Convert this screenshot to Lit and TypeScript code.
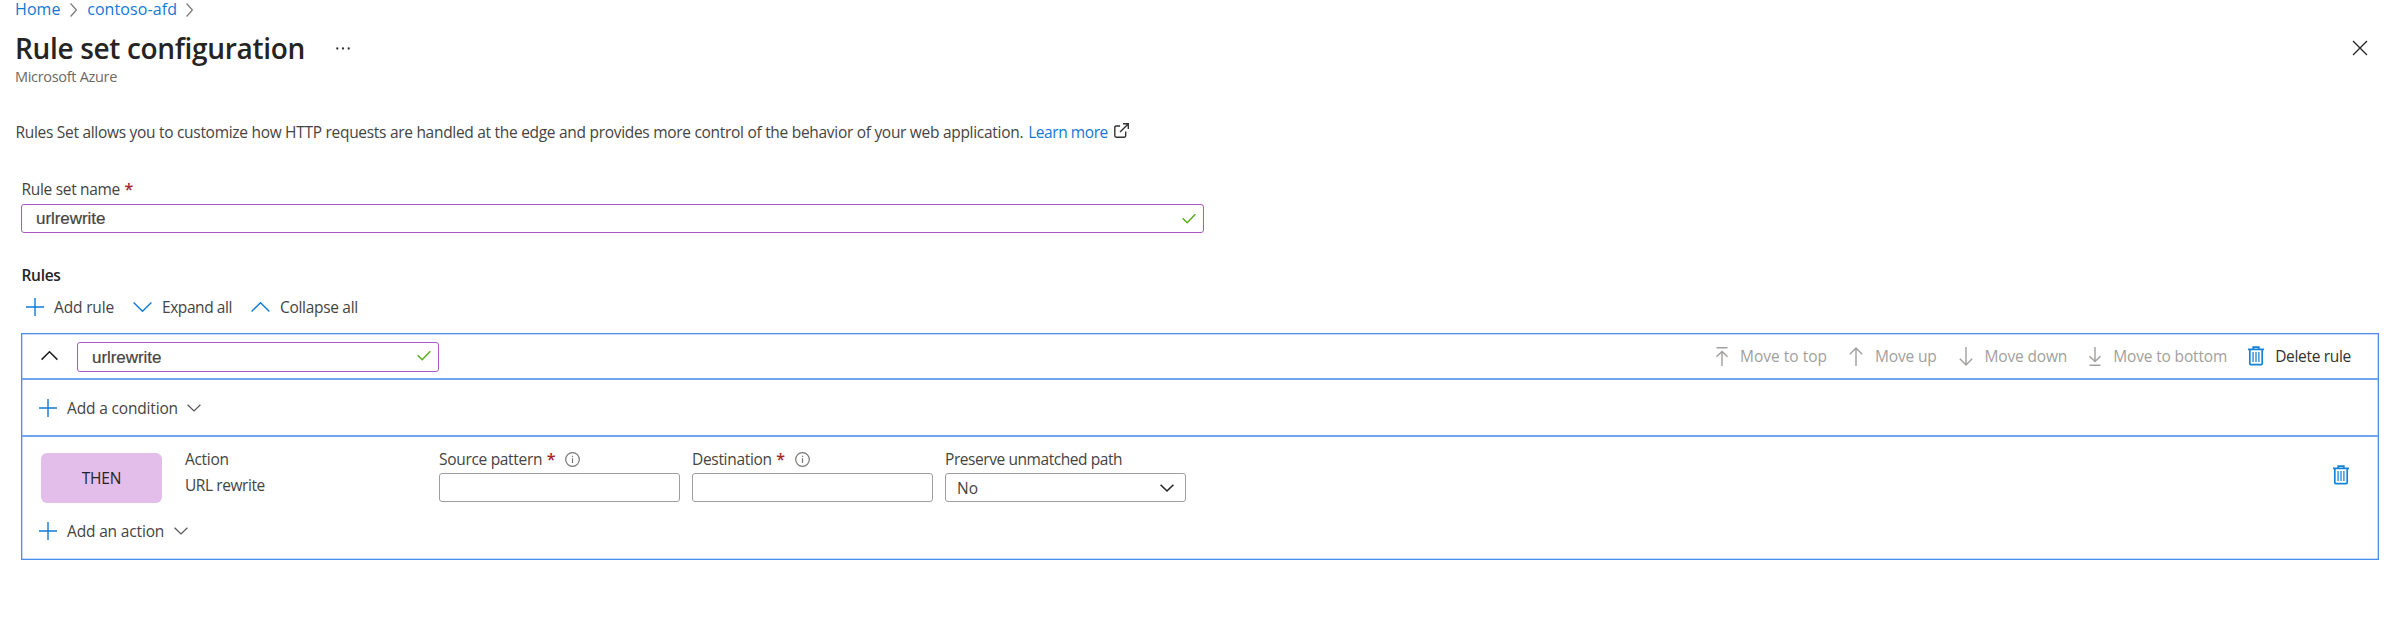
import { LitElement, html, svg, css } from "lit";
import { customElement } from "lit/decorators.js";

const stroke = (w: number, h: number, d: string, cls = "") =>
  html`<svg class="icon ${cls}" width=${w} height=${h} viewBox="0 0 ${w} ${h}"><path d=${d} /></svg>`;

const plus = (cls = "") => stroke(18, 18, "M9 0V18M0 9H18", `blue ${cls}`);
const check = () => stroke(14, 11, "M.7 5.2L5.2 9.7L13.3 1.2", "green");
const down = (cls: string) => stroke(14, 8, "M.6 .8L7 7L13.4 .8", cls);
const info = () => html`<svg class="icon info" width="15" height="15" viewBox="0 0 15 15">
  ${svg`<circle cx="7.5" cy="7.5" r="6.8" /><path d="M7.5 6.2V11M7.5 3.8V5" />`}</svg>`;
const trash = () => html`<svg class="icon trash" width="16" height="20" viewBox="0 0 16 20">
  ${svg`<path class="lid" d="M0 3.3H16M5.2 3V1.2H10.8V3" /><path class="can" d="M1.8 3.5V17.6Q1.8 18.6 2.8 18.6H13.2Q14.2 18.6 14.2 17.6V3.5" /><path class="bars" d="M5.1 6V16M8 6V16M10.9 6V16" />`}</svg>`;

@customElement("app-root")
export class AppRoot extends LitElement {
  static styles = css`
    :host { display: block; height: 622px; background: #fff; color: #454442;
      font: 15.5px/20px "Open Sans", "Noto Sans", sans-serif; }
    * { box-sizing: border-box; }
    .row { display: flex; align-items: center; white-space: nowrap; }
    .icon { display: block; flex: none; fill: none; stroke: currentColor; stroke-width: 1.4; overflow: visible; }
    .blue { color: #0f7ad8; }
    .green { color: #5bac1b; }
    .green.icon { stroke-width: 1.5; }
    .t15 { letter-spacing: -0.16px; }
    .t3 { letter-spacing: -0.31px; }
    .t4 { letter-spacing: -0.43px; }

    .crumbs { height: 18px; padding-left: 15px; font-size: 16px; line-height: 18px; letter-spacing: 0.1px; color: #1478d4; }
    .crumbs .sep { color: #777; margin: 2px 10.5px 0 9px; stroke-width: 1.2; }
    .titlebar { height: 36px; margin-top: 12px; padding: 0 33px 0 15px; }
    h1 { margin: 0; width: 321px; font-size: 28px; line-height: 36px; font-weight: 600; letter-spacing: -0.33px; color: #252423; }
    .dots { fill: #333; stroke: none; }
    .close { margin-left: auto; color: #222; stroke-width: 1.3; }
    .sub { margin-top: 1px; padding-left: 15px; font-size: 14.5px; color: #6b6967; }
    .desc { margin-top: 35px; padding-left: 15.5px; }
    .desc .copy { letter-spacing: -0.295px; }
    .desc a { color: #1478d4; margin: 0 6px 0 5px; }
    .desc .icon { margin-top: -4px; color: #333; }

    .main { padding: 37px 21px 0; }
    .caption { padding-left: 0.5px; }
    .star { color: #a4262c; font-weight: 600; margin-left: 4.5px; font-size: 16px; }
    .field { display: flex; align-items: center; height: 29px; border: 1px solid #a09f9e; border-radius: 3px; padding: 0 11px; background: #fff; }
    .valid { justify-content: space-between; border: 1px solid #ab58c4; padding: 0 7px 0 14px; font-family: "Liberation Sans", Arial, sans-serif; font-size: 17px; letter-spacing: -0.05px; -webkit-text-stroke: 0.2px #454442; }
    .name { width: 1183px; margin-top: 5px; }
    .heading { margin-top: 32px; padding-left: 0.5px; font-weight: 600; color: #252423; }
    .tools { height: 20px; margin-top: 12px; padding-left: 5px; }
    .tools .icon { margin-right: 10px; }
    .add { width: 107px; }
    .expand { width: 118px; }

    .card { height: 227px; margin-top: 16px; width: 2358px; border: 1px solid #4c8deb; box-shadow: inset 0 0 0 0.5px #8db8f5; }
    .head { height: 46px; padding: 0 27px 0 19px; border-bottom: 2px solid #72a5ef; }
    .head .up { color: #222; margin: -1px 19px 0 0; stroke-width: 1.6; }
    .rule { width: 362px; height: 30px; margin-top: 1px; }
    .rule .icon { margin-top: -3px; }
    .rule span { margin-top: 3px; }
    .cmds { margin-left: auto; color: #a19f9d; }
    .cmds .lbl { margin-left: 12px; }
    .cmds .row + .row { margin-left: 22px; }
    .cmds .row + .del { margin-left: 21px; color: #323130; }
    .cmds .del .lbl { margin-left: 11px; }
    .trash { color: #1583d8; }
    .trash .lid, .trash .can { stroke-width: 1.7; }
    .trash .bars { stroke-width: 1.5; stroke: #3b96de; }
    .cond { height: 57px; padding-left: 17px; border-bottom: 2px solid #72a5ef; }
    .addline .icon.blue { margin-right: 10px; }
    .chev { color: #555; margin-left: 9.5px; stroke-width: 1.2; }
    .body { padding: 16px 29px 0 19px; }
    .action { display: flex; align-items: flex-start; height: 50px; }
    .then { display: grid; place-items: center; width: 121px; height: 50px; border-radius: 6px; background: #e3beeb; color: #252423; font-weight: 500; letter-spacing: -0.2px; }
    .kind { width: 254px; margin: -4px 0 0 23px; }
    .kind div + div { margin-top: 6px; }
    .param { width: 241px; margin: -4px 12px 0 0; }
    .param .field { margin-top: 4px; }
    .select { justify-content: space-between; }
    .dark { color: #222; stroke-width: 1.6; }
    .info { color: #777; margin-left: 9.5px; stroke-width: 1.2; }
    .bin { margin: 12px 0 0 auto; }
    .more { margin: 18px 0 0 -2px; }
  `;

  render() {
    const sep = () => stroke(7, 14, "M.6 .5L6.4 7L.6 13.5", "sep");
    const star = html`<span class="star">*</span>`;
    return html`
      <nav class="row crumbs"><span>Home</span>${sep()}<span>contoso-afd</span>${sep()}</nav>
      <header class="row titlebar">
        <h1>Rule set configuration</h1>
        <svg class="icon dots" width="14" height="3" viewBox="0 0 14 3"><circle cx="1.3" cy="1.5" r="1.15" /><circle cx="7" cy="1.5" r="1.15" /><circle cx="12.7" cy="1.5" r="1.15" /></svg>
        ${stroke(14, 14, "M0 0L14 14M14 0L0 14", "close")}
      </header>
      <div class="sub t3">Microsoft Azure</div>
      <div class="row desc">
        <span class="copy">Rules Set allows you to customize how HTTP requests are handled at the edge and provides more control of the behavior of your web application.</span>
        <a class="t4">Learn more</a>
        ${stroke(15, 15, "M6 3H2.2Q.8 3 .8 4.4V12.8Q.8 14.2 2.2 14.2H10.3Q11.7 14.2 11.7 12.8V8.5M9 .8H14.3V6M14.2 .9L6 9")}
      </div>
      <main class="main">
        <div class="row caption"><span class="t3">Rule set name</span>${star}</div>
        <div class="field valid name"><span>urlrewrite</span>${check()}</div>
        <div class="heading t3">Rules</div>
        <div class="row tools">
          <div class="row add">${plus()}<span class="t15">Add rule</span></div>
          <div class="row expand">${stroke(19, 10, "M.6 .6L9.5 9.3L18.4 .6", "blue")}<span class="t4">Expand all</span></div>
          <div class="row">${stroke(19, 10, "M.6 9.4L9.5 .7L18.4 9.4", "blue")}<span class="t3">Collapse all</span></div>
        </div>
        <section class="card">
          <div class="row head">
            ${stroke(17, 9, "M.6 8.6L8.5 .8L16.4 8.6", "up")}
            <div class="field valid rule"><span>urlrewrite</span>${check()}</div>
            <div class="row cmds">
              <div class="row">${stroke(12, 19, "M.5 .8H11.5M6 19V4.6M.5 9.8L6 4.4L11.5 9.8")}<span class="lbl">Move to top</span></div>
              <div class="row">${stroke(14, 19, "M7 19V1M.8 7.2L7 1L13.2 7.2")}<span class="lbl t15">Move up</span></div>
              <div class="row">${stroke(14, 19, "M7 0V18M.8 11.8L7 18L13.2 11.8")}<span class="lbl t15">Move down</span></div>
              <div class="row">${stroke(12, 19, "M.5 18.2H11.5M6 0V14.4M.5 9.2L6 14.6L11.5 9.2")}<span class="lbl t15">Move to bottom</span></div>
              <div class="row del">${trash()}<span class="lbl t3">Delete rule</span></div>
            </div>
          </div>
          <div class="row addline cond">${plus()}<span class="t15">Add a condition</span>${down("chev")}</div>
          <div class="body">
            <div class="action">
              <div class="then">THEN</div>
              <div class="kind"><div class="t3">Action</div><div class="t4">URL rewrite</div></div>
              <div class="param"><div class="row"><span class="t3">Source pattern</span>${star}${info()}</div><div class="field"></div></div>
              <div class="param"><div class="row"><span class="t3">Destination</span>${star}${info()}</div><div class="field"></div></div>
              <div class="param"><div class="row"><span class="t4">Preserve unmatched path</span></div><div class="field select"><span>No</span>${down("dark")}</div></div>
              <div class="bin">${trash()}</div>
            </div>
            <div class="row addline more">${plus()}<span class="t15">Add an action</span>${down("chev")}</div>
          </div>
        </section>
      </main>`;
  }
}
